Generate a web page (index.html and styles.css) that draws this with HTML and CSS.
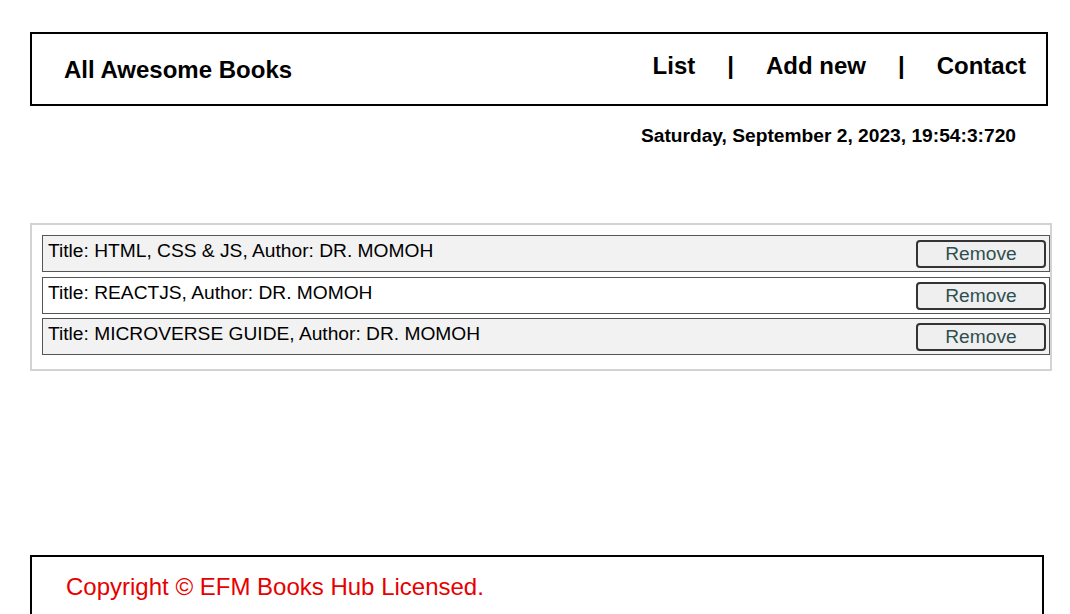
FILE: index.html
```html
<!DOCTYPE html>
<html lang="en">
<head>
<meta charset="utf-8">
<title>Awesome Books</title>
<link rel="stylesheet" href="styles.css">
</head>
<body>
  <header class="topbar">
    <h1 class="brand">All Awesome Books</h1>
    <nav class="nav">
      <a class="nav-link" href="#list">List</a>
      <span class="nav-sep">|</span>
      <a class="nav-link" href="#add">Add new</a>
      <span class="nav-sep">|</span>
      <a class="nav-link" href="#contact">Contact</a>
    </nav>
  </header>
  <p class="date">Saturday, September 2, 2023, 19:54:3:720</p>
  <section class="books">
    <div class="book odd">
      <p class="book-text">Title: HTML, CSS &amp; JS, Author: DR. MOMOH</p>
      <button class="remove" type="button">Remove</button>
    </div>
    <div class="book">
      <p class="book-text">Title: REACTJS, Author: DR. MOMOH</p>
      <button class="remove" type="button">Remove</button>
    </div>
    <div class="book odd">
      <p class="book-text">Title: MICROVERSE GUIDE, Author: DR. MOMOH</p>
      <button class="remove" type="button">Remove</button>
    </div>
  </section>
  <footer class="footer">
    <p class="copy">Copyright © EFM Books Hub Licensed.</p>
  </footer>
</body>
</html>
```
FILE: styles.css
```css
html, body {
  margin: 0;
  padding: 0;
  background: #fff;
}

body {
  font-family: "Liberation Sans", Arial, sans-serif;
  color: #000;
  padding: 32px 0 0 30px;
}

.topbar {
  width: 1018px;
  height: 74px;
  box-sizing: border-box;
  border: 2px solid #000;
  display: flex;
  align-items: center;
  justify-content: space-between;
  padding: 0 20px 0 32px;
}

.brand {
  margin: 0;
  font-size: 24px;
  font-weight: bold;
  padding-top: 2px;
}

.nav {
  display: flex;
  align-items: center;
  gap: 32px;
  font-size: 24px;
  font-weight: bold;
  padding-bottom: 6px;
}

.nav-link {
  color: #000;
  text-decoration: none;
}

.date {
  margin: 19px 0 0 0;
  width: 986px;
  text-align: right;
  font-size: 19.2px;
  font-weight: bold;
}

.books {
  margin-top: 76px;
  width: 1022px;
  box-sizing: border-box;
  border: 2px solid #d3d3d3;
  padding: 10px 0 14px 10px;
  display: flex;
  flex-direction: column;
  gap: 4.5px;
}

.book {
  height: 37px;
  box-sizing: border-box;
  border: 1px solid #555;
  background: #fff;
  display: flex;
  justify-content: space-between;
  align-items: flex-start;
  padding: 4px 3px 0 5px;
}

.book.odd {
  background: #f2f2f2;
}

.book-text {
  margin: 0;
  font-size: 19.2px;
}

.remove {
  width: 130px;
  height: 28px;
  box-sizing: border-box;
  border: 2px solid #333;
  border-radius: 4px;
  background: #efefef;
  color: #2f4f4f;
  font-family: "Liberation Sans", Arial, sans-serif;
  font-size: 19.2px;
  padding: 0;
  line-height: 22px;
}

.footer {
  margin-top: 184px;
  width: 1014px;
  box-sizing: border-box;
  border: 2px solid #000;
  padding: 16px 0 20px 34px;
}

.copy {
  margin: 0;
  color: #e60000;
  font-size: 24px;
}
```
